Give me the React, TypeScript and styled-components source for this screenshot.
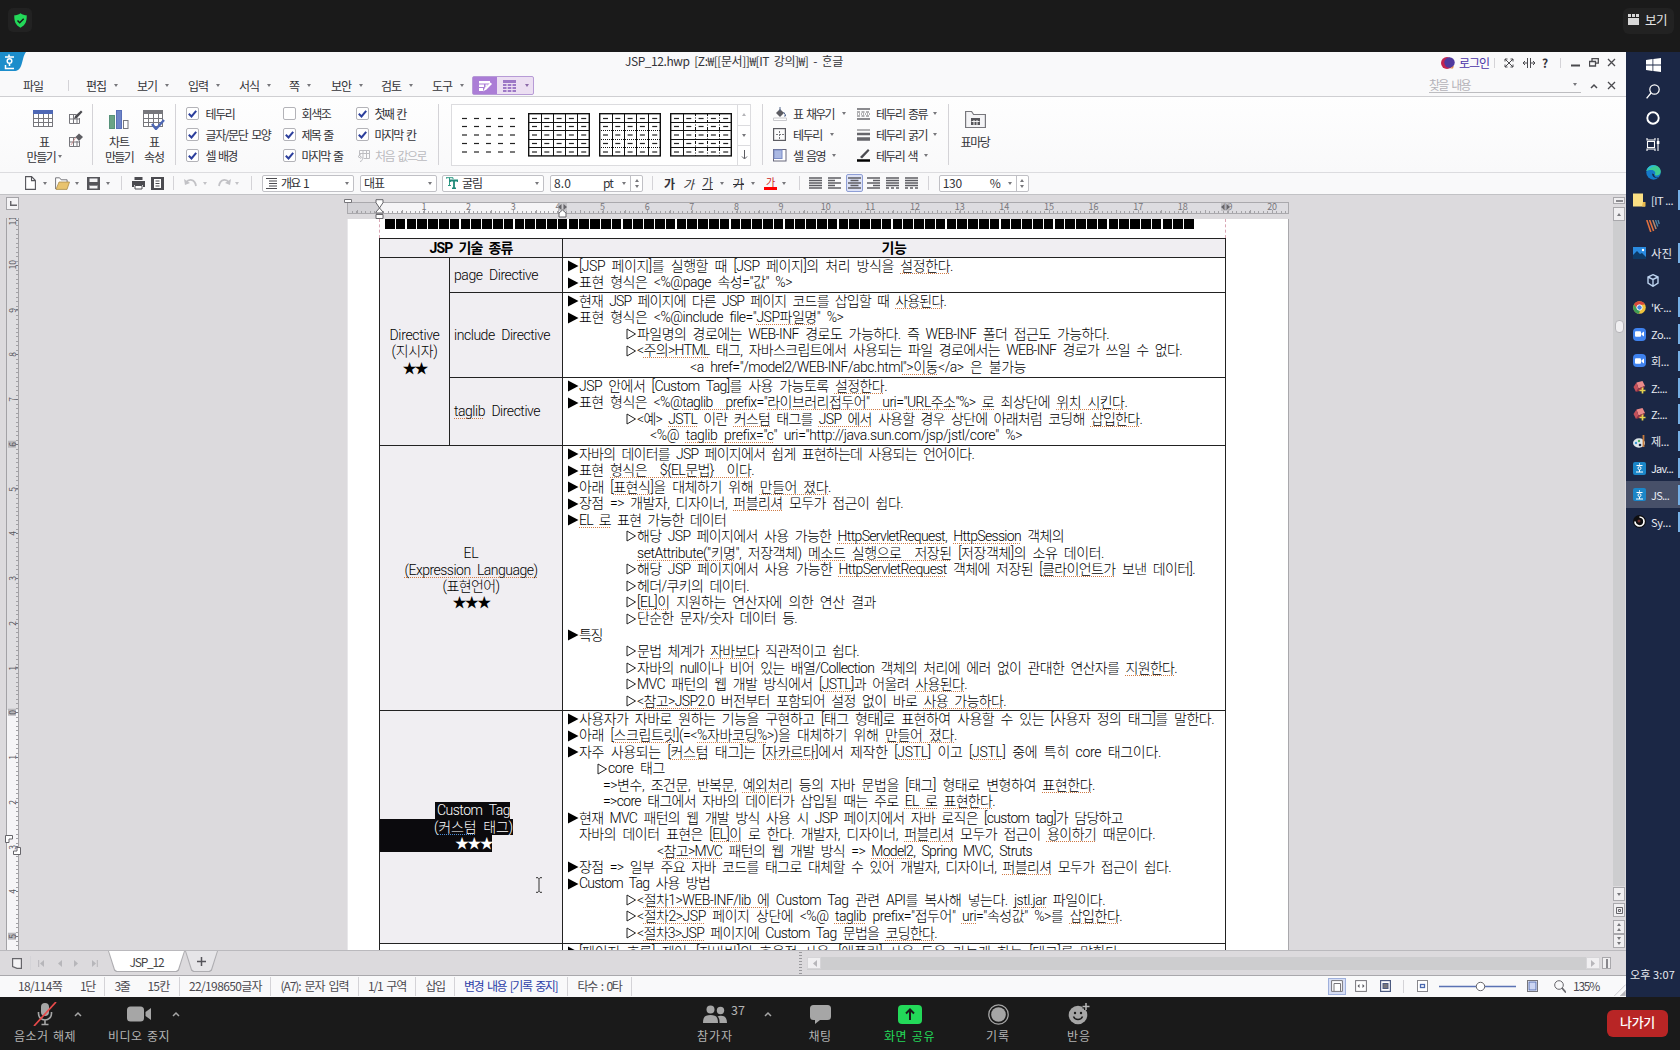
import React, { useLayoutEffect, useRef, useState } from "react";
import styled, { createGlobalStyle, css } from "styled-components";

const Global = createGlobalStyle`
  * { box-sizing: border-box; }
  body { margin: 0; background: #1a1a1a; overflow: hidden; }
  svg { display: block; flex: none; }
`;

const UI = `"Noto Sans CJK KR", "Noto Sans", sans-serif`;

/* ---------- text that fills a known measure ---------- */

const Run = styled.span<{ $size?: number; $color?: string; $weight?: number }>`
  display: inline-block;
  flex: none;
  white-space: pre;
  ${(p) => p.$size && `font-size: ${p.$size}px;`}
  ${(p) => p.$color && `color: ${p.$color};`}
  ${(p) => p.$weight && `font-weight: ${p.$weight};`}
`;

const Misspelt = styled.span<{ $color?: string }>`
  text-decoration: underline dotted ${(p) => p.$color || "#cf7a45"} 1px;
  text-underline-offset: 1.5px;
  text-decoration-skip-ink: none;
`;

type FitProps = { w: number; children: string; size?: number; color?: string; weight?: number; mark?: string };

/* A "|" in the string switches the spelling underline on and off. */
function Fit({ w, children, size, color, weight, mark }: FitProps) {
  const ref = useRef<HTMLSpanElement>(null);
  const [gap, setGap] = useState(0);
  const parts = children.split("|");
  const count = parts.join("").length;
  useLayoutEffect(() => {
    const el = ref.current;
    if (!el) return;
    el.style.letterSpacing = "0px";
    const natural = el.getBoundingClientRect().width;
    const next = (w - natural) / count;
    el.style.letterSpacing = `${next}px`;
    setGap(next);
  }, [w, count]);
  return (
    <Run ref={ref} $size={size} $color={color} $weight={weight} style={{ letterSpacing: gap }}>
      {parts.map((p, i) => (i % 2 ? <Misspelt key={i} $color={mark}>{p}</Misspelt> : p))}
    </Run>
  );
}

/* ---------- generic bits ---------- */

const Slot = styled.div<{ $w: number }>`
  flex: none;
  width: ${(p) => p.$w}px;
  height: 100%;
  display: flex;
  align-items: center;
`;

const Rule = styled.div<{ $h: number }>`
  width: 1px;
  height: ${(p) => p.$h}px;
  background: #d4d3d7;
`;

const Caret = styled.i<{ $up?: boolean; $color?: string }>`
  display: block;
  width: 0;
  height: 0;
  border: 2.5px solid transparent;
  ${(p) =>
    p.$up
      ? css`border-top: 0; border-bottom: 3px solid ${p.$color || "#77777b"};`
      : css`border-bottom: 0; border-top: 3px solid ${p.$color || "#77777b"};`}
`;

/* ---------- meeting top strip ---------- */

const TopStrip = styled.header`
  height: 52px;
  background: #1a1a1a;
  display: flex;
  justify-content: space-between;
  padding: 8px 6px 0 8px;
  font-family: ${UI};
`;
const Shield = styled.div`
  width: 24px;
  height: 24px;
  border-radius: 5px;
  background: #222;
  display: grid;
  place-items: center;
`;
const ViewButton = styled.div`
  width: 51px;
  height: 26px;
  border-radius: 6px;
  background: #222;
  color: #e6e6e6;
  display: flex;
  align-items: center;
  gap: 6px;
  padding: 0 0 4px 5px;
`;

/* ---------- frame ---------- */

const Middle = styled.div`
  display: flex;
  height: 945px;
`;
const Hwp = styled.main`
  width: 1626px;
  display: flex;
  flex-direction: column;
  background: #f9f9fa;
  font-family: ${UI};
  font-size: 12px;
  word-spacing: 2.5px;
  color: #333338;
  overflow: hidden;
`;

const TitleBar = styled.div`
  height: 23px;
  display: flex;
  align-items: flex-start;
`;
const AppMark = styled.div`
  width: 625px;
`;
const TitleText = styled.div`
  width: 816px;
  line-height: 18px;
`;
const TitleTools = styled.div`
  display: flex;
  height: 21px;
  align-items: center;
`;
const MenuBar = styled.nav`
  height: 22px;
  display: flex;
  align-items: center;
  padding-left: 23px;
  border-bottom: 1px solid #cfcfd2;
`;
const TableTabs = styled.div`
  display: flex;
  width: 62px;
  height: 19px;
  border: 1px solid #b79bd6;
  border-radius: 2px;
  background: #ecdff2;
`;
const TabHalf = styled.div<{ $on?: boolean }>`
  width: 24px;
  display: grid;
  place-items: center;
  background: ${(p) => (p.$on ? "#ab7dd6" : "transparent")};
`;
const FindBox = styled.div`
  width: 152px;
  height: 16px;
  margin-bottom: 2px;
  border-bottom: 1px solid #bdbdc0;
  display: flex;
  align-items: center;
  justify-content: space-between;
  padding-right: 4px;
`;

/* ---------- ribbon ---------- */

const Ribbon = styled.section`
  height: 76px;
  display: flex;
  align-items: center;
  background: linear-gradient(#fefefe, #f9f9fa);
  border-bottom: 1px solid #dcdcdf;
`;
const BigButton = styled.div<{ $w: number }>`
  width: ${(p) => p.$w}px;
  height: 61px;
  display: flex;
  flex-direction: column;
  align-items: center;
  padding-top: 6px;
  line-height: 14.5px;
`;
const BigIcon = styled.div`
  height: 25px;
`;
const LabelRow = styled.div`
  display: flex;
  align-items: center;
  gap: 2px;
`;
const Stack = styled.div<{ $w: number; $gap?: number }>`
  width: ${(p) => p.$w}px;
  display: flex;
  flex-direction: column;
  gap: ${(p) => p.$gap ?? 0}px;
`;
const Line21 = styled.div<{ $gap?: number }>`
  height: 21px;
  display: flex;
  align-items: center;
  gap: ${(p) => p.$gap ?? 7}px;
`;
const Tick = styled.div`
  width: 12.5px;
  height: 12.5px;
  border: 1px solid #b3b3b8;
  border-radius: 2px;
  background: #fff;
  display: grid;
  place-items: center;
`;
const Gallery = styled.div`
  width: 300px;
  height: 62px;
  border: 1px solid #dcdcdf;
  background: #fff;
  display: flex;
  align-items: center;
  padding-left: 6px;
`;
const GalleryScroll = styled.div`
  width: 13px;
  height: 100%;
  border-left: 1px solid #dcdcdf;
  display: grid;
  grid-template-rows: repeat(3, 1fr);
`;
const GalleryStep = styled.div`
  display: grid;
  place-items: center;
  & + & { border-top: 1px solid #dcdcdf; }
`;

/* ---------- format bar ---------- */

const FormatBar = styled.section`
  height: 22px;
  display: flex;
  align-items: center;
  padding: 0 0 1px 25px;
  border-bottom: 1px solid #c2c2c5;
`;
const Combo = styled.div<{ $w: number }>`
  width: ${(p) => p.$w}px;
  height: 17px;
  border: 1px solid #c0c0c5;
  border-radius: 2px;
  background: #fff;
  display: flex;
  align-items: center;
  padding: 0 4px 0 3px;
  gap: 4px;
  line-height: 14px;
`;
const Grow = styled.div`
  flex: 1;
`;
const Spin = styled.div`
  width: 12px;
  height: 15px;
  margin-right: -4px;
  border-left: 1px solid #c0c0c5;
  display: flex;
  flex-direction: column;
  align-items: center;
  justify-content: space-evenly;
`;
const Ga = styled.span<{ $italic?: boolean; $under?: boolean; $strike?: boolean; $bold?: boolean }>`
  font-size: 12px;
  line-height: 13px;
  font-weight: ${(p) => (p.$bold ? 700 : 400)};
  font-style: ${(p) => (p.$italic ? "italic" : "normal")};
  ${(p) => p.$under && "border-bottom: 1px solid #333338;"}
  ${(p) => p.$strike && "text-decoration: line-through;"}
`;
const RedGa = styled.span`
  width: 13px;
  font-size: 10px;
  line-height: 11px;
  color: #c22;
  text-align: center;
  border-bottom: 3px solid #f00;
`;
const AlignBox = styled.div<{ $on?: boolean }>`
  width: 17px;
  height: 18px;
  display: grid;
  place-items: center;
  border: 1px solid ${(p) => (p.$on ? "#8f9fd6" : "transparent")};
  background: ${(p) => (p.$on ? "#dde2f6" : "transparent")};
  border-radius: 2px;
`;

/* ---------- document ---------- */

const Desk = styled.section`
  height: 755px;
  background: #dcdadd;
  display: flex;
  overflow: hidden;
`;
const Left = styled.aside`
  width: 347px;
  padding: 2px 0 0 6px;
`;
const Corner = styled.div`
  width: 13px;
  height: 13px;
  border: 1px solid #a5a4a8;
  background: #f4f3f5;
  padding: 3px 0 0 3px;
  margin-bottom: 8px;
`;
const VRuler = styled.div`
  width: 13px;
  height: 740px;
  display: flex;
  flex-direction: column;
  border-left: 1px solid #a3a2a6;
  border-right: 1px solid #a3a2a6;
  background: linear-gradient(#dfdee1 0 492px, #f6f5f7 492px);
  overflow: hidden;
`;
const VMark = styled.div`
  flex: none;
  height: 44.75px;
  display: flex;
  align-items: center;
  justify-content: space-between;
  padding-left: 1px;
  background: repeating-linear-gradient(#a3a2a6 0 1px, transparent 1px 4.475px) right top / 2px 100% no-repeat;
  font-size: 8.5px;
  color: #55545a;
  &:first-child { margin-top: -20px; }
`;
const VNum = styled.span<{ $stop?: boolean }>`
  writing-mode: vertical-rl;
  transform: rotate(180deg);
  line-height: 8px;
  padding: 1px 0;
  background: ${(p) => (p.$stop ? "#b9b8bc" : "transparent")};
`;
const VTick = styled.i`
  width: 3px;
  height: 1px;
  background: #77767b;
`;
const VHandle = styled.div<{ $x: number; $y: number }>`
  position: absolute;
  left: ${(p) => p.$x}px;
  top: ${(p) => p.$y}px;
`;

const Center = styled.div`
  width: 942px;
  display: flex;
  flex-direction: column;
`;
const HRuler = styled.div`
  position: relative;
  flex: none;
  margin-top: 7px;
  height: 12px;
  display: flex;
  padding-left: 9px;
  border: 1px solid #aaa9ad;
  background:
    repeating-linear-gradient(90deg, #a3a2a6 0 1px, transparent 1px 4.465px) 4px bottom / 100% 2px no-repeat,
    repeating-linear-gradient(90deg, #a3a2a6 0 1px, transparent 1px 22.325px) 8.5px bottom / 100% 3px no-repeat,
    linear-gradient(90deg, #d3d2d6 0 32px, #f5f4f6 32px 215px, #dddce0 215px);
`;
const HMark = styled.div`
  flex: none;
  width: 44.65px;
  text-align: center;
  font-size: 9px;
  line-height: 7px;
  color: #77767b;
`;
const Handle = styled.div<{ $x: number; $y: number }>`
  position: absolute;
  left: ${(p) => p.$x}px;
  top: ${(p) => p.$y}px;
`;
const Page = styled.article`
  position: relative;
  margin-top: 5px;
  height: 731px;
  overflow: hidden;
  background: #fff;
  border-right: 1px solid #a9a8ac;
  border-left: 1px solid #e8e7ea;
  font-family: Roboto, "Noto Sans CJK KR", sans-serif;
  font-size: 14px;
  line-height: 16.45px;
  font-weight: 300;
  word-spacing: 3.5px;
  color: #000;
`;
const Margin = styled.div`
  height: 19px;
  width: 847px;
  margin-left: 31px;
  padding-left: 5px;
  border-left: 1px dashed #d9a6b4;
  border-right: 1px dashed #d9a6b4;
`;
const Blocks = styled.div`
  width: 809px;
  height: 10px;
  background: repeating-linear-gradient(90deg, #000 0 9.6px, #fff 9.6px 10.8px);
`;
const Table = styled.div`
  display: grid;
  margin-left: 31px;
  width: 847px;
  grid-template-columns: 70px 113px 1fr;
  grid-template-rows: 19px 35px 85px 68px 265px 233px 60px;
  border-top: 1px solid #222;
  border-left: 1px solid #222;
`;
const Cell = styled.div<{ $tint?: boolean; $cols?: number; $rows?: number; $kind?: "center" | "middle" | "text" }>`
  grid-column: span ${(p) => p.$cols ?? 1};
  grid-row: span ${(p) => p.$rows ?? 1};
  background: ${(p) => (p.$tint ? "#f0eef2" : "#fff")};
  border-right: 1px solid #222;
  border-bottom: 1px solid #222;
  display: flex;
  flex-direction: column;
  justify-content: ${(p) => (p.$kind === "text" ? "flex-start" : "center")};
  align-items: ${(p) => (p.$kind === "center" ? "center" : "flex-start")};
  padding: ${(p) => (p.$kind === "text" ? "0 0 0 5px" : p.$kind === "middle" ? "0 0 0 4px" : "0")};
`;
const Para = styled.div<{ $in: number }>`
  flex: none;
  height: 16.45px;
  padding-left: ${(p) => p.$in}px;
  display: flex;
  white-space: pre;
`;
const Mark = styled.span`
  flex: none;
  width: 11px;
  height: 16.45px;
  display: flex;
  align-items: center;
`;
const Picked = styled.div<{ $l: number; $w: number }>`
  margin-left: ${(p) => p.$l}px;
  width: ${(p) => p.$w}px;
  height: 16.7px;
  background: #0b0a0d;
  color: #fff;
  display: flex;
  justify-content: flex-end;
`;
const IBeam = styled.div`
  position: absolute;
  left: 187px;
  top: 658px;
`;

const Right = styled.aside`
  width: 337px;
  display: flex;
  justify-content: flex-end;
`;
const ScrollCol = styled.div`
  width: 14px;
  display: flex;
  flex-direction: column;
  align-items: center;
  background: #dcdadd;
  padding-top: 2px;
`;
const ScrollTrack = styled.div`
  flex: 1;
  width: 12px;
  margin: 0 0 1px;
  background: #cdcdcf;
  padding: 99px 2px 0;
`;
const Thumb = styled.div`
  width: 9px;
  height: 13px;
  border: 1px solid #b5b4b8;
  border-radius: 4px;
  background: #f0eff1;
`;
const SmallBtn = styled.div<{ $w?: number; $h: number; $mb?: number; $soft?: boolean }>`
  flex: none;
  width: ${(p) => p.$w ?? 12}px;
  height: ${(p) => p.$h}px;
  margin-bottom: ${(p) => p.$mb ?? 0}px;
  border: 1px solid ${(p) => (p.$soft ? "#d6d5d8" : "#a9a8ac")};
  background: #f0eff1;
  display: flex;
  flex-direction: column;
  gap: 2px;
  align-items: center;
  justify-content: center;
`;

/* ---------- sheets + status ---------- */

const Sheets = styled.div`
  height: 26px;
  background: #dcdadd;
  border-top: 1px solid #bab9bd;
  border-bottom: 1px solid #a9a8ac;
  display: flex;
  align-items: center;
  padding-left: 12px;
`;
const SheetTab = styled.div<{ $w: number; $on?: boolean }>`
  width: ${(p) => p.$w}px;
  height: 21px;
  align-self: flex-start;
  clip-path: polygon(0 0, 100% 0, calc(100% - 6px) 92%, calc(100% - 8px) 100%, 8px 100%, 6px 92%);
  background: #aeadb1;
  padding: 0 1px 1px;
`;
const SheetFace = styled.div<{ $on?: boolean }>`
  height: 100%;
  clip-path: polygon(0 0, 100% 0, calc(100% - 6px) 92%, calc(100% - 8px) 100%, 8px 100%, 6px 92%);
  background: ${(p) => (p.$on ? "#fff" : "#e6e5e8")};
  display: flex;
  align-items: center;
  justify-content: center;
`;
const HTrack = styled.div`
  width: 804px;
  height: 13px;
  margin-left: 5px;
  display: flex;
  align-items: center;
  justify-content: space-between;
  background: linear-gradient(90deg, #cdcdcf 0 793px, transparent 793px);
`;
const Grip = styled.div`
  width: 3px;
  height: 23px;
  background: repeating-linear-gradient(#99989c 0 1px, transparent 1px 3px);
`;
const Status = styled.footer`
  height: 21px;
  background: #f9f9fa;
  display: flex;
  align-items: center;
  padding: 0 0 1px 18px;
  line-height: 16px;
  color: #4c4a50;
`;
const ViewOn = styled.div`
  width: 18px;
  height: 17px;
  border: 1px solid #9fb0dc;
  background: #d7def4;
  display: grid;
  place-items: center;
`;

/* ---------- windows taskbar ---------- */

const Taskbar = styled.aside`
  width: 54px;
  background: #1b2745;
  display: flex;
  flex-direction: column;
  color: #e8ebf2;
  font-family: ${UI};
`;
const Task = styled.div<{ $on?: boolean; $run?: boolean; $h?: number }>`
  height: ${(p) => p.$h ?? 26.8}px;
  flex: none;
  display: flex;
  align-items: center;
  justify-content: ${(p) => (p.$run ? "flex-start" : "center")};
  padding-left: ${(p) => (p.$run ? 7 : 0)}px;
  gap: 5px;
  background:
    ${(p) => (p.$run ? "linear-gradient(#76b0e6, #76b0e6) right center / 2px 20px no-repeat," : "")}
    ${(p) => (p.$on ? "linear-gradient(#475069, #475069)" : "none")};
`;
const Clock = styled.div`
  margin-top: auto;
  padding: 0 0 13px 4px;
`;
const Tile = styled.div<{ $bg: string; $r?: number }>`
  flex: none;
  width: 13px;
  height: 13px;
  border-radius: ${(p) => p.$r ?? 2}px;
  background: ${(p) => p.$bg};
  display: grid;
  place-items: center;
`;

/* ---------- meeting controls ---------- */

const Controls = styled.footer`
  height: 53px;
  background: #1a1a1a;
  display: flex;
  font-family: ${UI};
  color: #b4b4b4;
  font-size: 12px;
  word-spacing: 1.5px;
`;
const Control = styled.div<{ $l: number; $w: number; $green?: boolean }>`
  flex: none;
  margin-left: ${(p) => p.$l}px;
  width: ${(p) => p.$w}px;
  display: flex;
  flex-direction: column;
  align-items: center;
  color: ${(p) => (p.$green ? "#23d959" : "#b4b4b4")};
`;
const ControlIcon = styled.div`
  height: 30px;
  display: flex;
  align-items: center;
  padding-top: 4px;
`;
const ControlCaret = styled.div<{ $l: number }>`
  width: 8px;
  margin-left: ${(p) => p.$l}px;
  padding-top: 14px;
`;
const Count = styled.span`
  font-size: 12.5px;
  line-height: 12px;
  margin: -8px -18px 0 4px;
  width: 14px;
`;
const Leave = styled.div`
  margin: 13px 12px 0 auto;
  width: 61px;
  height: 27px;
  border-radius: 6px;
  background: #b82525;
  color: #fff;
  display: flex;
  justify-content: center;
  line-height: 24px;
`;

/* ---------- drawings ---------- */

const X = ({ c = "#4a4a4e" }) => (
  <svg width="9" height="9" viewBox="0 0 9 9"><path d="M1 1l7 7M8 1l-7 7" stroke={c} strokeWidth="1.3" /></svg>
);
const Chevron = ({ c = "#4a4a4e" }) => (
  <svg width="8" height="6" viewBox="0 0 8 6"><path d="M1 5l3-3 3 3" fill="none" stroke={c} strokeWidth="1.5" /></svg>
);
const GridIcon = ({ head = "#4e68b5", check = false }) => (
  <svg width="22" height="20" viewBox="0 0 22 20">
    <rect x=".5" y=".5" width="19" height="16" fill="#fff" stroke="#77777c" />
    <rect x="0" y="0" width="20" height="4" fill={head} />
    <path d="M.5 8.5h19M.5 12.5h19M5.5 4v12.500M10.500 4v12.500M15.500 4v12.500" stroke="#77777c" fill="none" />
    {check && <path d="M9 14l4 5 8-9" fill="none" stroke="#4e68b5" strokeWidth="2.400" />}
  </svg>
);
const SmallTable = ({ erase = false }) => (
  <svg width="14" height="14" viewBox="0 0 14 14">
    <path d="M.5 4v9.500h10V8M.500 4.500h7M.500 9h10M4.500 4v9.500M8 8v5.500" fill="none" stroke="#77777c" />
    {erase ? <><path d="M2 12l5-8" stroke="#c88" strokeWidth=".8" /><path d="M6.500 4L10 .500 14 4l-4 4z" fill="#5e5e63" /></>
      : <path d="M5 9l1-3L12 .500 13.500 2 8 8z" fill="#4b4b50" />}
  </svg>
);
const ChartIcon = () => (
  <svg width="20" height="19" viewBox="0 0 20 19">
    <rect x=".5" y="5.500" width="5" height="13" fill="#6aa385" stroke="#57927a" />
    <rect x="7.500" y=".500" width="5" height="18" fill="#6e84c8" stroke="#5970b8" />
    <rect x="14.500" y="10.500" width="4.500" height="8" fill="#fff" stroke="#77777c" />
  </svg>
);
const Checked = ({ on = true }) => (
  <Tick>{on && <svg width="9" height="8" viewBox="0 0 9 8"><path d="M.8 3.800l2.700 2.700L8.200.8" fill="none" stroke="#2c3f9c" strokeWidth="2" /></svg>}</Tick>
);

function Style({ kind }: { kind: number }) {
  const w = kind === 0 ? 57 : 62;
  const x0 = 4;
  const step = kind === 0 ? 12 : 12.3;
  const rows = [5.5, 13.5, 22, 30.5, 39];
  return (
    <svg width={w} height="44" viewBox={`0 0 ${w} 44`}>
      {rows.map((y) => [0, 1, 2, 3, 4].map((i) => (
        <path key={`${y}${i}`} d={`M${x0 + i * step} ${y}h5`} stroke="#222" strokeWidth="1.200" />
      )))}
      {kind > 0 && (
        <g fill="none" stroke="#111">
          <rect x=".7" y=".7" width="60.600" height="42.200" strokeWidth="1.400" />
          <path d="M0 9.500h62M13.500 0v43" />
          <path d="M0 17.500h62M0 26.500h62M0 34.500h62" strokeDasharray={kind === 2 ? "1 1" : undefined} />
          <path d="M25.500 0v43M37.500 0v43M49.500 0v43" strokeDasharray={kind === 3 ? "3 1.500 1 1.500" : undefined} />
        </g>
      )}
    </svg>
  );
}

const FillIcon = () => (
  <svg width="14" height="14" viewBox="0 0 14 14"><path d="M3 6l4-4 4 4-4 4z" fill="#5c5c62" /><path d="M7 0v4M10.500 5l2 3v1h-1.500" stroke="#55688f" fill="none" /><path d="M.5 11h13v2.500h-13z" fill="#fff" stroke="#c9c9cd" /></svg>
);
const BorderIcon = () => (
  <svg width="13" height="13" viewBox="0 0 13 13"><rect x=".6" y=".6" width="11.800" height="11.800" fill="none" stroke="#5c5c62" strokeWidth="1.200" /><path d="M6.500 3v8M3 6.500h8" stroke="#77777c" strokeDasharray="2 1" /></svg>
);
const ShadeIcon = () => (
  <svg width="14" height="13" viewBox="0 0 14 13"><rect x=".5" y=".5" width="12.500" height="11.500" fill="#fff" stroke="#66667a" /><rect x="1" y="1" width="8" height="8.500" fill="#aab8e2" stroke="#7b8cc6" /></svg>
);
const KindIcon = () => (
  <svg width="13" height="12" viewBox="0 0 13 12"><path d="M0 1h13M0 11h13" stroke="#66666b" strokeWidth="1.500" /><path d="M0 4h13M0 8h13" stroke="#66666b" strokeDasharray="3 1.500" /><path d="M0 6h13" stroke="#66666b" strokeDasharray="1 1" /></svg>
);
const ThickIcon = () => (
  <svg width="13" height="12" viewBox="0 0 13 12"><path d="M0 1h13" stroke="#66666b" /><path d="M0 5h13" stroke="#66666b" strokeWidth="2.500" /><path d="M0 10h13" stroke="#66666b" strokeWidth="3.500" /></svg>
);
const PenIcon = () => (
  <svg width="14" height="13" viewBox="0 0 14 13"><path d="M3 8L11 0l1.500 1.500L5 9.500z" fill="#4b4b50" /><path d="M0 11.500h13" stroke="#000" strokeWidth="2.500" /></svg>
);

type AlignKind = "j" | "l" | "c" | "r" | "d" | "n";
const AlignIcon = ({ kind }: { kind: AlignKind }) => {
  const rows = [1, 3.5, 6, 8.5, 11];
  return (
    <svg width="13" height="12" viewBox="0 0 13 12">
      {rows.map((y, i) => {
        const short = i % 2 === 1;
        let a = 0, b = 13;
        if (kind === "l" && short) b = 7;
        if (kind === "r" && short) a = 6;
        if (kind === "c" && short) { a = 2.5; b = 10.5; }
        const dash = (kind === "d" || kind === "n") && i === 4 ? "3 2" : undefined;
        return <path key={y} d={`M${a} ${y}H${b}`} stroke="#5c5c62" strokeWidth="1.5" strokeDasharray={dash} />;
      })}
    </svg>
  );
};

const HwpLogo = () => (
  <svg width="27" height="19" viewBox="0 0 27 19">
    <path d="M0 0h26c-3 4-3 9-5 14-1.500 3.500-3 5-7 5H0z" fill="#1c8dcb" />
    <g fill="none" stroke="#fff" strokeWidth="1.500"><path d="M9 2.500v2M5 5h9M5.500 13v3.500h8.500" /><circle cx="9.500" cy="9" r="2.300" /><path d="M9.500 12v2" /></g>
  </svg>
);

/* ---------- content ---------- */

const menus: [string, number, number, number][] = [
  // label, label width, distance to caret, distance to next label
  ["편집", 20, 28, 23], ["보기", 20, 28, 23], ["입력", 20, 28, 23], ["서식", 20, 28, 22],
  ["쪽", 10, 18, 24], ["보안", 20, 28, 22], ["검토", 20, 28, 23], ["도구", 20, 28, 12],
];

type P = [number, number, string];
const L = 568;
const jspPage: P[] = [
  [L, 953, "▶[JSP 페이지]를 실행할 때 [JSP 페이지]의 처리 방식을 |설정한다|."],
  [L, 792, "▶표현 형식은 <%@page 속성=\"값\" %>"],
];
const jspInclude: P[] = [
  [L, 946, "▶현재 JSP 페이지에 다른 JSP 페이지 코드를 삽입할 때 |사용된다|."],
  [L, 843, "▶표현 형식은 <%@include file=\"|JSP파일명|\" %>"],
  [626, 1109, "▷파일명의 경로에는 WEB-INF 경로도 가능하다. 즉 WEB-INF 폴더 접근도 가능하다."],
  [626, 1182, "▷<|주의>HTML| 태그, 자바스크립트에서 사용되는 파일 경로에서는 WEB-INF 경로가 쓰일 수 없다."],
  [690, 1026, "<a href=\"/model2/WEB-INF/abc.html|\">이동|</a> 은 불가능"],
];
const jspTaglib: P[] = [
  [L, 887, "▶JSP 안에서 [Custom Tag]를 사용 가능토록 |설정한다|."],
  [L, 1127, "▶표현 형식은 <%@|taglib  prefix|=\"|라이브러리접두어\"  uri|=\"|URL주소|\"%> |로| 최상단에 |위치 시킨다|."],
  [626, 1142, "▷<예> |JSTL| 이란 |커스텀| 태그를 |JSP 에서| 사용할 경우 상단에 아래처럼 코딩해 |삽입한다|."],
  [650, 1022, "<%@ |taglib| |prefix=\"c|\" uri=\"http://java.sun.com/jsp/jstl/core\" %>"],
];
const elText: P[] = [
  [L, 974, "▶자바의 데이터를 JSP 페이지에서 쉽게 표현하는데 사용되는 언어이다."],
  [L, 754, "▶표현 |형식은  ${EL문법}  이다|."],
  [L, 831, "▶아래 [|표현식]|을 대체하기 위해 |만들어 졌다|."],
  [L, 903, "▶장점 => 개발자, 디자이너, |퍼블리셔| 모두가 접근이 쉽다."],
  [L, 726, "▶|EL 로| 표현 가능한 데이터"],
  [626, 1064, "▷해당 JSP 페이지에서 사용 가능한 |HttpServletRequest|, |HttpSession| 객체의"],
  [637, 1104, "|setAttribute(\"키명|\", 저장객체) |메소드| |실행으로  저장된| [저장객체]의 소유 데이터."],
  [626, 1195, "▷해당 JSP 페이지에서 사용 가능한 |HttpServletRequest| 객체에 저장된 [|클라이언트가| 보낸 데이터]."],
  [626, 749, "▷헤더/쿠키의 데이터."],
  [626, 876, "▷[|EL]이| 지원하는 연산자에 의한 연산 결과"],
  [626, 797, "▷단순한 문자/숫자 데이터 등."],
  [L, 602, "▶특징"],
  [626, 859, "▷문법 체계가 |자바보다| 직관적이고 쉽다."],
  [626, 1177, "▷자바의 null이나 비어 있는 배열/Collection 객체의 처리에 에러 없이 관대한 연산자를 |지원한다|."],
  [626, 967, "▷MVC 패턴의 웹 개발 방식에서 [|JSTL]|과 어울려 |사용된다|."],
  [626, 1006, "▷<|참고>JSP2|.0 버전부터 포함되어 설정 없이 바로 |사용 가능하다|."],
];
const customText: P[] = [
  [L, 1214, "▶사용자가 자바로 원하는 기능을 구현하고 [태그 형태]로 표현하여 사용할 수 있는 [사용자 정의 태그]를 말한다."],
  [L, 957, "▶아래 [|스크립트릿|](=<|%자바코딩%|>)을 대체하기 위해 |만들어 졌다|."],
  [L, 1161, "▶자주 사용되는 [|커스텀| 태그]는 [|자카르타|]에서 제작한 [|JSTL|] 이고 [|JSTL|] 중에 특히 core 태그이다."],
  [597, 665, "▷core 태그"],
  [603, 1095, "=>변수, 조건문, 반복문, |예외처리| 등의 자바 문법을 [태그] 형태로 변형하여 |표현한다|."],
  [603, 995, "=>core 태그에서 자바의 데이터가 삽입될 때는 주로 |EL 로| |표현한다|."],
  [L, 1123, "▶현재 MVC 패턴의 웹 개발 방식 사용 시 JSP 페이지에서 자바 로직은 [custom tag]가 담당하고"],
  [579, 1155, "자바의 데이터 표현은 [|EL]이| 로 한다. 개발자, 디자이너, |퍼블리셔| 모두가 접근이 |용이하기| 때문이다."],
  [657, 1032, "<|참고>MVC| 패턴의 웹 개발 방식 => |Model2|, Spring MVC, Struts"],
  [L, 1171, "▶장점 => 일부 주요 자바 코드를 태그로 대체할 수 있어 개발자, 디자이너, |퍼블리셔| 모두가 접근이 쉽다."],
  [L, 710, "▶Custom Tag 사용 방법"],
  [626, 1105, "▷<|절차1>WEB-INF/lib 에| Custom Tag 관련 API를 복사해 넣는다. |jstl.jar| 파일이다."],
  [626, 1122, "▷<|절차2>JSP| 페이지 상단에 <%@ |taglib| prefix=\"접두어\" |uri|=\"속성값\" %>를 |삽입한다|."],
  [626, 937, "▷<|절차3>JSP| 페이지에 Custom Tag 문법을 |코딩한다|."],
];
const nextText: P[] = [
  [L, 1121, "▶[페이지 흐름] 제어, [자바빈]의 효율적 사용, [애플릿] 사용 등을 가능케 하는 [태그]를 말한다."],
];

function Paras({ lines }: { lines: P[] }) {
  return (
    <>
      {lines.map(([from, to, text]) => {
        const head = text[0];
        const marked = head === "▶" || head === "▷";
        return (
          <Para key={text} $in={from - L}>
            {marked && (
              <Mark>
                <svg width="11" height="12" viewBox="0 0 11 12">
                  {head === "▶" ? <path d="M0 .5L10.500 6 0 11.500z" fill="#000" /> : <path d="M1 1L9.500 6 1 11z" fill="none" stroke="#222" />}
                </svg>
              </Mark>
            )}
            <Fit w={to - from - (marked ? 11 : 0)}>{marked ? text.slice(1) : text}</Fit>
          </Para>
        );
      })}
    </>
  );
}

const statusItems: [string, number, number, boolean, string?][] = [
  // text, width, distance to following item, rule after
  ["18/114쪽", 44, 18, false], ["1단", 15, 9, true], ["3줄", 15, 18, false], ["15칸", 22, 9, true],
  ["22/198650글자", 73, 8, true], ["(A7): 문자 입력", 68, 9, true], ["1/1 구역", 38, 9, true],
  ["삽입", 19, 9, true], ["변경 내용 [기록 중지]", 93, 10, true, "#2d3fa8"], ["타수 : 0타", 44, 9, true],
];

const hwpTile = (
  <Tile $bg="#1b86c8">
    <svg width="9" height="10" viewBox="0 0 9 10"><g fill="none" stroke="#fff"><path d="M4.500.3v1.400M1.500 2.500h6M1 9h7M4.500 7v2" /><circle cx="4.500" cy="5.200" r="1.500" /></g></svg>
  </Tile>
);
const zoomTile = (
  <Tile $bg="#3f82ee" $r={4}>
    <svg width="9" height="6" viewBox="0 0 9 6"><rect width="6" height="5.500" y=".2" rx="1" fill="#fff" /><path d="M6.500 2.200L9 .6v4.800L6.500 3.800z" fill="#fff" /></svg>
  </Tile>
);
const cubeIcon = (
  <svg width="13" height="13" viewBox="0 0 13 13"><path d="M3.500 1.500L9.500 0 12 5 5.500 7.500z" fill="#ec8a8a" /><path d="M3.500 1.500L5.500 7.500 3 11 .500 6z" fill="#c4505a" /><path d="M5.500 7.500L12 5l-2 4-7 2z" fill="#9c3444" /><path d="M9.500 6.500v6M6.500 9.500h6" stroke="#e6d34e" strokeWidth="1.700" /></svg>
);

const StopArrows = () => (
  <svg width="11" height="8" viewBox="0 0 11 8"><path d="M1 0h9v8H1z" fill="#b9b8bc" opacity=".7" /><path d="M4.500 1v6L1 4zM6.500 1v6L10 4z" fill="#66656a" /></svg>
);

export default function App() {
  return (
    <>
      <Global />
      <TopStrip>
        <Shield>
          <svg width="13" height="15" viewBox="0 0 13 15"><path d="M6.500.3C8.500 1.800 10.500 2.300 12.700 2.300c.2 6-1 9.700-6.200 12.400C1.300 12 .1 8.300.3 2.300 2.500 2.300 4.500 1.800 6.500.3z" fill="#23d959" /><path d="M3.500 7.500l2.200 2.200 4-4" fill="none" stroke="#1a1a1a" strokeWidth="1.500" /></svg>
        </Shield>
        <ViewButton>
          <svg width="11" height="11" viewBox="0 0 11 11"><path d="M0 0h3v3H0zM4 0h3v3H4zM8 0h3v3H8zM0 4h11v7H0z" fill="#d8d8d8" /></svg>
          <Fit w={22} size={12.5}>보기</Fit>
        </ViewButton>
      </TopStrip>

      <Middle>
        <Hwp>
          <TitleBar>
            <AppMark><HwpLogo /></AppMark>
            <TitleText><Fit w={217}>{"JSP_12.hwp [Z:₩[[문서]]₩[IT 강의]₩] - ᄒᆞᆫ글"}</Fit></TitleText>
            <TitleTools>
              <Slot $w={18}><svg width="14" height="12" viewBox="0 0 14 12"><circle cx="6" cy="6" r="6" fill="#c32450" /><circle cx="8.500" cy="5.500" r="5.200" fill="#503a9e" /><path d="M9 11.500l4-3-1 3z" fill="#e88d4a" /></svg></Slot>
              <Slot $w={35}><Fit w={30} color="#4a32a8">로그인</Fit></Slot>
              <Slot $w={10}><Rule $h={10} /></Slot>
              <Slot $w={19}><svg width="10" height="10" viewBox="0 0 10 10"><path d="M1 3.500V1h2.500M6.500 1H9v2.500M9 6.500V9H6.500M3.500 9H1V6.500M1 1l8 8M9 1L1 9" fill="none" stroke="#4a4a4e" /></svg></Slot>
              <Slot $w={19}><svg width="12" height="10" viewBox="0 0 12 10"><path d="M4.500 0v10M7.500 0v10M0 5h4M8 5h4M2 3L0 5l2 2M10 3l2 2-2 2" fill="none" stroke="#4a4a4e" /></svg></Slot>
              <Slot $w={18}><Fit w={7} weight={700}>?</Fit></Slot>
              <Slot $w={11}><Rule $h={10} /></Slot>
              <Slot $w={18}><svg width="9" height="9" viewBox="0 0 9 9"><path d="M0 7.500h9" stroke="#4a4a4e" strokeWidth="2" /></svg></Slot>
              <Slot $w={18}><svg width="10" height="9" viewBox="0 0 10 9"><path d="M.5 3.500h6v4.500h-6zM3 3V.7h6.300v4.500H7" fill="none" stroke="#4a4a4e" strokeWidth="1.300" /></svg></Slot>
              <X />
            </TitleTools>
          </TitleBar>

          <MenuBar>
            <Slot $w={45}><Fit w={20}>파일</Fit></Slot>
            <Slot $w={18}><Rule $h={11} /></Slot>
            {menus.map(([name, w, toCaret, toNext]) => (
              <React.Fragment key={name}>
                <Slot $w={toCaret}><Fit w={w}>{name}</Fit></Slot>
                <Slot $w={toNext}><Caret /></Slot>
              </React.Fragment>
            ))}
            <TableTabs>
              <TabHalf $on><svg width="13" height="12" viewBox="0 0 13 12"><path d="M0 1h11v2.500H0zM0 4.500h5V7H0zM0 8h4v3H0zM6.500 4.500H9L6.500 7z" fill="#fff" /><path d="M4 11.500l2-4 5.500-5 1.500 1.500-5.500 5.500z" fill="#fff" /></svg></TabHalf>
              <TabHalf><svg width="13" height="12" viewBox="0 0 13 12"><path d="M0 0h13v3H0zM0 4h3.500v2H0zM4.700 4h3.600v2H4.700zM9.500 4H13v2H9.500zM0 7h3.500v2H0zM4.700 7h3.600v2H4.700zM9.500 7H13v2H9.500zM0 10h3.500v2H0zM4.700 10h3.600v2H4.700zM9.500 10H13v2H9.500z" fill="#9d78c6" /></svg></TabHalf>
              <Slot $w={10}><Caret $color="#8b6aa8" style={{ marginLeft: 4 }} /></Slot>
            </TableTabs>
            <Slot $w={895} />
            <Slot $w={161}>
              <FindBox><Fit w={41} color="#b4b2b8">찾을 내용</Fit><Caret /></FindBox>
            </Slot>
            <Slot $w={17}><Chevron /></Slot>
            <X />
          </MenuBar>

          <Ribbon>
            <Slot $w={23} />
            <BigButton $w={42}>
              <BigIcon><GridIcon /></BigIcon>
              <Fit w={10}>표</Fit>
              <LabelRow><Fit w={29}>만들기</Fit><Caret /></LabelRow>
            </BigButton>
            <Slot $w={27}>
              <Stack $w={22} $gap={9} style={{ marginTop: -13 }}><Slot $w={22} style={{ paddingLeft: 4 }}><SmallTable /></Slot><Slot $w={22} style={{ paddingLeft: 4 }}><SmallTable erase /></Slot></Stack>
            </Slot>
            <Slot $w={9}><Rule $h={61} /></Slot>
            <BigButton $w={36}>
              <BigIcon><ChartIcon /></BigIcon>
              <Fit w={20}>차트</Fit>
              <Fit w={28}>만들기</Fit>
            </BigButton>
            <BigButton $w={34}>
              <BigIcon><GridIcon head="#77777c" check /></BigIcon>
              <Fit w={10}>표</Fit>
              <Fit w={20}>속성</Fit>
            </BigButton>
            <Slot $w={4} />
            <Slot $w={11}><Rule $h={61} /></Slot>
            <Stack $w={97}>
              <Line21><Checked /><Fit w={29}>테두리</Fit></Line21>
              <Line21><Checked /><Fit w={65}>글자/문단 모양</Fit></Line21>
              <Line21><Checked /><Fit w={31}>셀 배경</Fit></Line21>
            </Stack>
            <Stack $w={73}>
              <Line21 $gap={6}><Checked on={false} /><Fit w={29}>회색조</Fit></Line21>
              <Line21 $gap={6}><Checked /><Fit w={31}>제목 줄</Fit></Line21>
              <Line21 $gap={6}><Checked /><Fit w={41}>마지막 줄</Fit></Line21>
            </Stack>
            <Stack $w={82}>
              <Line21 $gap={6}><Checked /><Fit w={31}>첫째 칸</Fit></Line21>
              <Line21 $gap={6}><Checked /><Fit w={41}>마지막 칸</Fit></Line21>
              <Line21 $gap={4}>
                <svg width="15" height="14" viewBox="0 0 15 14"><path d="M3.500 1.500h10v8h-6M3.500 4.500h10M3.500 1.500V6M7 1.500V9M10.500 1.500V9M4 7.500c3 0 3.500 4.500 0 5M5 5.500l-3 2 3 2" fill="none" stroke="#bdbdc1" /></svg>
                <Fit w={51} color="#bbbbbf">처음 값으로</Fit>
              </Line21>
            </Stack>
            <Slot $w={13}><Rule $h={61} /></Slot>
            <Gallery>
              <Slot $w={70}><Style kind={0} /></Slot>
              <Slot $w={71}><Style kind={1} /></Slot>
              <Slot $w={71}><Style kind={2} /></Slot>
              <Slot $w={67}><Style kind={3} /></Slot>
              <GalleryScroll>
                <GalleryStep><Caret $up $color="#b5b5b9" /></GalleryStep>
                <GalleryStep><Caret /></GalleryStep>
                <GalleryStep><svg width="7" height="10" viewBox="0 0 7 10"><path d="M3.500 0v8.500M1 6.500L3.500 9 6 6.500" fill="none" stroke="#5c5c62" /></svg></GalleryStep>
              </GalleryScroll>
            </Gallery>
            <Slot $w={11} />
            <Slot $w={11}><Rule $h={61} /></Slot>
            <Stack $w={84}>
              <Line21 $gap={6}><FillIcon /><Fit w={41}>표 채우기</Fit><Caret style={{ marginLeft: 2 }} /></Line21>
              <Line21><BorderIcon /><Fit w={29}>테두리</Fit><Caret style={{ marginLeft: 1 }} /></Line21>
              <Line21 $gap={6}><ShadeIcon /><Fit w={32}>셀 음영</Fit><Caret style={{ marginLeft: 1 }} /></Line21>
            </Stack>
            <Stack $w={91}>
              <Line21 $gap={6}><KindIcon /><Fit w={51}>테두리 종류</Fit><Caret /></Line21>
              <Line21 $gap={6}><ThickIcon /><Fit w={51}>테두리 굵기</Fit><Caret /></Line21>
              <Line21 $gap={5}><PenIcon /><Fit w={41}>테두리 색</Fit><Caret style={{ marginLeft: 2 }} /></Line21>
            </Stack>
            <Slot $w={9}><Rule $h={61} /></Slot>
            <BigButton $w={36}>
              <BigIcon><svg width="21" height="19" viewBox="0 0 21 19"><path d="M.6 17.500V1.500h6l2 3h11.800v13z" fill="#f4f4f6" stroke="#77777c" strokeWidth="1.200" /><rect x="6" y="8" width="9" height="7" fill="#55555a" /><path d="M6.500 11.500h8M9 10v5M12 10v5" stroke="#fff" strokeWidth=".9" /></svg></BigIcon>
              <Fit w={29}>표마당</Fit>
            </BigButton>
          </Ribbon>

          <FormatBar>
            <Slot $w={18}><svg width="11" height="14" viewBox="0 0 11 14"><path d="M.6.6h6L10.400 4.500v8.900H.6zM6.500.6v4h4" fill="#fff" stroke="#55555a" strokeWidth="1.100" /></svg></Slot>
            <Slot $w={12}><Caret /></Slot>
            <Slot $w={20}><svg width="15" height="13" viewBox="0 0 15 13"><path d="M.6 12V.8h4l1.500 2h6V5" fill="#fff" stroke="#77777c" /><path d="M1 12.400L4 5h10.500L12 12.400z" fill="#e9c36d" stroke="#a98b4b" strokeWidth=".8" /></svg></Slot>
            <Slot $w={12}><Caret /></Slot>
            <Slot $w={19}><svg width="13" height="13" viewBox="0 0 13 13"><path d="M0 0h13v13H0z" fill="#55555a" /><path d="M2.500 1.500h8v3.500h-8zM2.500 8h8v3.500h-8z" fill="#f4f4f6" /><path d="M2.500 8.200h8" stroke="#55555a" /></svg></Slot>
            <Slot $w={15}><Caret /></Slot>
            <Slot $w={11}><Rule $h={14} /></Slot>
            <Slot $w={19}><svg width="13" height="13" viewBox="0 0 13 13"><path d="M2.500 0h8v3h-8zM0 4h13v6h-2V8H2v2H0z" fill="#4b4b50" /><path d="M3 8.500h7V12H3z" fill="#fff" stroke="#4b4b50" /></svg></Slot>
            <Slot $w={22}><svg width="13" height="13" viewBox="0 0 13 13"><path d="M0 0h13v13H0z" fill="#4b4b50" /><path d="M3 2h7v9H3z" fill="#fff" /><path d="M4.500 4h4M4.500 6.500h4M4.500 9h4" stroke="#4b4b50" /></svg></Slot>
            <Slot $w={11}><Rule $h={14} /></Slot>
            <Slot $w={19}><svg width="14" height="10" viewBox="0 0 14 10"><path d="M2 4.500C5 .5 11 1 12 8" fill="none" stroke="#c2c2c6" strokeWidth="1.800" /><path d="M0 1l1 6 5-2z" fill="#c2c2c6" /></svg></Slot>
            <Slot $w={14}><Caret $color="#c2c2c6" /></Slot>
            <Slot $w={18}><svg width="14" height="10" viewBox="0 0 14 10"><path d="M12 4.500C9 .5 3 1 2 8" fill="none" stroke="#c2c2c6" strokeWidth="1.800" /><path d="M14 1l-1 6-5-2z" fill="#c2c2c6" /></svg></Slot>
            <Slot $w={16}><Caret $color="#c2c2c6" /></Slot>
            <Slot $w={11}><Rule $h={14} /></Slot>
            <Slot $w={98}><Combo $w={92}><svg width="11" height="11" viewBox="0 0 11 11"><path d="M0 .5h11M3 3h8M3 5.500h8M3 8h8M0 10.500h11" stroke="#4b4b50" strokeWidth="1.100" /></svg><Fit w={27}>개요 1</Fit><Grow /><Caret /></Combo></Slot>
            <Slot $w={82}><Combo $w={77}><Fit w={20}>대표</Fit><Grow /><Caret /></Combo></Slot>
            <Slot $w={108}><Combo $w={102}><svg width="12" height="12" viewBox="0 0 12 12"><path d="M0 2V.7h7V2M3.500.7V8M2 8.500h3" fill="none" stroke="#2f9a86" /><path d="M4 5V3.500h8V5M8 3.500V11M6 11.300h4" fill="none" stroke="#1f8a78" strokeWidth="1.800" /></svg><Fit w={20}>굴림</Fit><Grow /><Caret /></Combo></Slot>
            <Slot $w={102}><Combo $w={93}><Fit w={17}>8.0</Fit><Grow /><Fit w={10}>pt</Fit><Slot $w={1} /><Caret /><Spin><Caret $up /><Caret /></Spin></Combo></Slot>
            <Slot $w={12}><Rule $h={14} /></Slot>
            <Slot $w={19}><Ga $bold>가</Ga></Slot>
            <Slot $w={19}><Ga $italic>가</Ga></Slot>
            <Slot $w={18}><Ga $under>가</Ga></Slot>
            <Slot $w={13}><Caret /></Slot>
            <Slot $w={18}><Ga $strike>가</Ga></Slot>
            <Slot $w={13}><Caret /></Slot>
            <Slot $w={18}><RedGa>가</RedGa></Slot>
            <Slot $w={17}><Caret /></Slot>
            <Slot $w={8}><Rule $h={14} /></Slot>
            {(["j", "l", "c", "r", "d", "n"] as AlignKind[]).map((k) => (
              <Slot key={k} $w={19.3}><AlignBox $on={k === "c"}><AlignIcon kind={k} /></AlignBox></Slot>
            ))}
            <Slot $w={5} />
            <Slot $w={11}><Rule $h={14} /></Slot>
            <Combo $w={90}><Fit w={19}>130</Fit><Grow /><Fit w={9}>%</Fit><Slot $w={1} /><Caret /><Spin><Caret $up /><Caret /></Spin></Combo>
          </FormatBar>

          <Desk>
            <Left style={{ position: "relative" }}>
              <Corner><svg width="7" height="5" viewBox="0 0 7 5"><path d="M.7 0v4.300H7" fill="none" stroke="#66656a" strokeWidth="1.500" /></svg></Corner>
              <VRuler>
                {[11, 10, 9, 8, 7, 6, 5, 4, 3, 2, 1, 0, 1, 2, 3, 4, 5].map((n, i) => (
                  <VMark key={i}><VNum $stop={i === 5 || i === 11 || i === 16}>{n}</VNum><VTick /></VMark>
                ))}
              </VRuler>
              <VHandle $x={5} $y={640}><svg width="8" height="8" viewBox="0 0 8 8"><path d="M.5.5h7v3.500H4v3.500H.5z" fill="#fff" stroke="#66656a" /></svg></VHandle>
              <VHandle $x={13} $y={652}><svg width="8" height="8" viewBox="0 0 8 8"><path d="M7.500.5v7h-7V4H4V.5z" fill="#fff" stroke="#66656a" /></svg></VHandle>
            </Left>

            <Center>
              <HRuler>
                {Array.from({ length: 21 }, (_, n) => <HMark key={n}>{n || ""}</HMark>)}
                <Handle $x={209} $y={0}><StopArrows /></Handle>
                <Handle $x={872} $y={0}><StopArrows /></Handle>
                <Handle $x={-4} $y={-4}><svg width="8" height="4"><path d="M.5.5h7v3h-7z" fill="#fff" stroke="#77767b" /></svg></Handle>
                <Handle $x={27} $y={-4}>
                  <svg width="9" height="20" viewBox="0 0 9 20"><path d="M1 .7h7v3L4.500 9l3.500 4v1H1v-1l3.500-4L1 3.700z" fill="#fff" stroke="#66656a" /><path d="M1 15.500h7v4H1z" fill="#fff" stroke="#66656a" /></svg>
                </Handle>
                <Handle $x={210} $y={6}><svg width="9" height="9" viewBox="0 0 9 9"><path d="M1 4l3.500-3L8 4v4H1z" fill="#fff" stroke="#66656a" /></svg></Handle>
              </HRuler>
              <Page>
                <Margin><Blocks /></Margin>
                <Table>
                  <Cell $tint $cols={2} $kind="center"><Fit w={83} weight={700}>JSP 기술 종류</Fit></Cell>
                  <Cell $tint $kind="center"><Fit w={25} weight={700}>기능</Fit></Cell>

                  <Cell $tint $rows={3} $kind="center">
                    <Fit w={50}>Directive</Fit><Fit w={46}>(지시자)</Fit><Fit w={24}>★★</Fit>
                  </Cell>
                  <Cell $tint $kind="middle"><Fit w={84}>page Directive</Fit></Cell>
                  <Cell $kind="text"><Paras lines={jspPage} /></Cell>
                  <Cell $tint $kind="middle"><Fit w={96}>include Directive</Fit></Cell>
                  <Cell $kind="text"><Paras lines={jspInclude} /></Cell>
                  <Cell $tint $kind="middle"><Fit w={86}>|taglib| Directive</Fit></Cell>
                  <Cell $kind="text"><Paras lines={jspTaglib} /></Cell>

                  <Cell $tint $cols={2} $kind="center">
                    <Fit w={15}>EL</Fit><Fit w={133}>|(Expression Language)|</Fit><Fit w={57}>(표현언어)</Fit><Fit w={37}>★★★</Fit>
                  </Cell>
                  <Cell $kind="text"><Paras lines={elText} /></Cell>

                  <Cell $tint $cols={2}>
                    <Picked $l={55} $w={75}><Fit w={73}>Custom Tag</Fit></Picked>
                    <Picked $l={0} $w={133}><Fit w={79} mark="#4a8ad0">(|커스텀| 태그)</Fit></Picked>
                    <Picked $l={0} $w={112}><Fit w={37}>★★★</Fit></Picked>
                  </Cell>
                  <Cell $kind="text"><Paras lines={customText} /></Cell>

                  <Cell $cols={2} />
                  <Cell $kind="text"><Paras lines={nextText} /></Cell>
                </Table>
                <IBeam><svg width="8" height="16" viewBox="0 0 8 16"><path d="M1 .7h2l1 1 1-1h2M4 1.500v13M1 15.300h2l1-1 1 1h2" fill="none" stroke="#333" /></svg></IBeam>
              </Page>
            </Center>

            <Right>
              <ScrollCol>
                <SmallBtn $h={7} $mb={3}><svg width="7" height="2"><path d="M0 1h7" stroke="#66656a" strokeWidth="1.500" /></svg></SmallBtn>
                <SmallBtn $h={14}><Caret $up /></SmallBtn>
                <ScrollTrack><Thumb /></ScrollTrack>
                <SmallBtn $h={14} $mb={2}><Caret /></SmallBtn>
                <SmallBtn $h={14} $mb={3}><svg width="7" height="7" viewBox="0 0 7 7"><path d="M.5.5h6v6h-6zM2.500 2.500h2v2h-2z" fill="none" stroke="#66656a" /></svg></SmallBtn>
                <SmallBtn $h={14}><Caret $up /><Caret $up /></SmallBtn>
                <SmallBtn $h={14} $mb={2}><Caret /><Caret /></SmallBtn>
              </ScrollCol>
            </Right>
          </Desk>

          <Sheets>
            <Slot $w={18}><svg width="10" height="11" viewBox="0 0 10 11"><path d="M.6.6h8.800v9.800H5L.6 8.500z" fill="#f4f3f5" stroke="#66656a" strokeWidth="1.200" /></svg></Slot>
            <Slot $w={8}><Rule $h={14} /></Slot>
            {[0, 1, 2, 3].map((k) => (
              <Slot key={k} $w={17.5}>
                <svg width="7" height="7" viewBox="0 0 7 7">
                  <path d={k < 2 ? "M6 0v7L2 3.500z" : "M1 0v7l4-3.500z"} fill="#b7b6ba" />
                  {k === 0 && <path d="M.7 0v7" stroke="#b7b6ba" />}
                  {k === 3 && <path d="M6.300 0v7" stroke="#b7b6ba" />}
                </svg>
              </Slot>
            ))}
            <SheetTab $w={77}><SheetFace $on><Fit w={34} color="#444">JSP_12</Fit></SheetFace></SheetTab>
            <SheetTab $w={33}><SheetFace><svg width="9" height="9" viewBox="0 0 9 9"><path d="M4.500 0v9M0 4.500h9" stroke="#55545a" strokeWidth="1.500" /></svg></SheetFace></SheetTab>
            <Slot $w={581} />
            <Grip />
            <HTrack>
              <SmallBtn $w={14} $h={12} $soft><svg width="5" height="7"><path d="M5 0v7L1 3.500z" fill="#b7b6ba" /></svg></SmallBtn>
              <Grow />
              <SmallBtn $w={14} $h={12} $soft><svg width="5" height="7"><path d="M0 0v7l4-3.500z" fill="#b7b6ba" /></svg></SmallBtn>
              <Slot $w={2} />
              <SmallBtn $w={9} $h={12}><svg width="2" height="9"><path d="M1 0v9" stroke="#66656a" strokeWidth="1.500" /></svg></SmallBtn>
            </HTrack>
          </Sheets>

          <Status>
            {statusItems.map(([text, w, gap, rule, color]) => (
              <React.Fragment key={text}>
                <Slot $w={w + gap}><Fit w={w} color={color}>{text}</Fit></Slot>
                {rule && <Slot $w={10.5}><Rule $h={19} /></Slot>}
              </React.Fragment>
            ))}
            <Grow />
            <Slot $w={27}><ViewOn><svg width="12" height="12" viewBox="0 0 12 12"><path d="M.6.6h10.800v10.800H.6zM3 11.400V3.500h6.500v8" fill="#fff" stroke="#77767b" /></svg></ViewOn></Slot>
            <Slot $w={25}><svg width="12" height="12" viewBox="0 0 12 12"><rect x=".6" y=".6" width="10.800" height="10.800" fill="#fff" stroke="#77767b" /><path d="M4.500 4L2.500 6l2 2zM7.500 4l2 2-2 2z" fill="#55545a" /></svg></Slot>
            <Slot $w={23}><svg width="11" height="12" viewBox="0 0 11 12"><rect x=".6" y=".6" width="9.800" height="10.800" fill="#fff" stroke="#4c5a80" strokeWidth="1.200" /><rect x="3" y="3.500" width="5" height="5" fill="#77767b" stroke="#4c5a80" /></svg></Slot>
            <Slot $w={14}><Rule $h={13} /></Slot>
            <Slot $w={22}><svg width="11" height="12" viewBox="0 0 11 12"><rect x=".5" y=".5" width="10" height="11" fill="#fff" stroke="#88878c" /><rect x="3.500" y="4.500" width="4" height="3" fill="#fff" stroke="#4a68ae" strokeWidth="1.300" /></svg></Slot>
            <Slot $w={88}><svg width="77" height="11" viewBox="0 0 77 11"><path d="M0 5.500h77" stroke="#5a72b4" strokeWidth="1.500" /><circle cx="41.500" cy="5.500" r="4.200" fill="#fff" stroke="#66656a" /></svg></Slot>
            <Slot $w={27}><svg width="11" height="12" viewBox="0 0 11 12"><rect x=".5" y=".5" width="10" height="11" fill="#fff" stroke="#77767b" /><rect x="2" y="2" width="7" height="8" fill="#cdd6f2" stroke="#5a72b4" /></svg></Slot>
            <Slot $w={19}><svg width="12" height="13" viewBox="0 0 12 13"><circle cx="5" cy="5" r="4.300" fill="none" stroke="#66656a" /><path d="M8 8l4 4.500" stroke="#66656a" strokeWidth="1.800" /></svg></Slot>
            <Slot $w={41}><Fit w={26}>135%</Fit></Slot>
            <svg width="12" height="20" viewBox="0 0 12 21"><path d="M0 21L12 9M6 21l6-6v6z" fill="#b4b3b7" stroke="#c8c7cb" /></svg>
          </Status>
        </Hwp>

        <Taskbar>
          <Task $h={26}><svg width="15" height="14" viewBox="0 0 15 14"><path d="M0 2l6.500-1v5.600H0zM7.300.9L15 0v6.600H7.300zM0 7.400h6.500V13L0 12zM7.300 7.400H15V14l-7.700-1z" fill="#fff" /></svg></Task>
          <Task><svg width="14" height="15" viewBox="0 0 14 15"><circle cx="8.500" cy="5.500" r="4.700" fill="none" stroke="#fff" strokeWidth="1.200" /><path d="M5 9L.6 14.400" stroke="#fff" strokeWidth="1.300" /></svg></Task>
          <Task><svg width="14" height="14" viewBox="0 0 14 14"><circle cx="7" cy="7" r="5.700" fill="none" stroke="#fff" strokeWidth="1.900" /></svg></Task>
          <Task $h={26.2}><svg width="14" height="13" viewBox="0 0 14 13"><path d="M1 0v2h8V0M1 13v-2h8v2M1.500 3.500h7v6h-7zM12 0v13" fill="none" stroke="#fff" strokeWidth="1.100" /><path d="M10.800 3h2.600v3h-2.600z" fill="#fff" /></svg></Task>
          <Task $h={28.5}><svg width="15" height="15" viewBox="0 0 15 15"><circle cx="7.500" cy="7.500" r="7.200" fill="#1479c9" /><path d="M.4 6C1.500 1.500 5 .3 7.800.3c4 0 7 3 7 6.200 0 2.500-2 4-4.300 4-1 0-2-.4-1.500-1.200C10 7.500 8.500 5 5.500 5 3 5 1.200 5.500.4 6z" fill="#3ccb94" /><path d="M.4 6C1.500 1.500 5 .3 7.800.3c1 0 2 .3 3 .7C7 1 3 3 .4 6z" fill="#2bb8dc" /><path d="M6 8.500c0 3 2.500 5 6 4.500 1.500-.5 2-1 2-1-2.500 1.300-6 .5-6-2.800z" fill="#1b2745" /></svg></Task>
          <Task $run><svg width="13" height="14" viewBox="0 0 13 14"><path d="M0 .5h10V9h2v4.500H0z" fill="#fbdf84" /><path d="M10 9h2.500v4.500H9z" fill="#e9b94a" /></svg><Fit w={22} size={11}>[IT ...</Fit></Task>
          <Task><svg width="14" height="12" viewBox="0 0 14 12"><path d="M.8 0l4 12M3.600 0l4 11" stroke="#e0703e" strokeWidth="1.600" /><path d="M6.800 0l3.300 9" stroke="#b7886c" strokeWidth="1.500" /><path d="M9.500 0l2.300 6.500M12 0l1.300 4" stroke="#4e86a8" strokeWidth="1.300" /></svg></Task>
          <Task $run><svg width="13" height="12" viewBox="0 0 13 12"><path d="M0 0h13v12H0z" fill="#2a8be0" /><path d="M0 12V8l4-4 3 3 2-1 4 4v2z" fill="#0d3a66" /><circle cx="10" cy="3" r="1.200" fill="#fff" /></svg><Fit w={21} size={11.5}>사진</Fit></Task>
          <Task $h={27.2}><svg width="12" height="13" viewBox="0 0 12 13"><path d="M6 .7l5 2.300v6L6 12.300 1 9V3zM1 3l5 2.500L11 3M6 5.500v6.800" fill="none" stroke="#bcd2ee" strokeWidth="1.400" /></svg></Task>
          <Task $run><svg width="13" height="13" viewBox="0 0 13 13"><circle cx="6.500" cy="6.500" r="6.300" fill="#f0c43c" /><path d="M1 3.500a6.300 6.300 0 0111 0L6.500 4 4 8z" fill="#d9483b" /><path d="M1 3.500l3.500 5 2.500 1-1 3.300A6.300 6.300 0 011 3.500z" fill="#3d9e55" /><circle cx="6.500" cy="6.500" r="2.700" fill="#4a86e0" stroke="#fff" /></svg><Fit w={20} size={11}>'K-...</Fit></Task>
          <Task $run>{zoomTile}<Fit w={20} size={11}>Zo...</Fit></Task>
          <Task $run>{zoomTile}<Fit w={18} size={11}>회...</Fit></Task>
          <Task $run>{cubeIcon}<Fit w={16} size={11}>Z:...</Fit></Task>
          <Task $run>{cubeIcon}<Fit w={16} size={11}>Z:...</Fit></Task>
          <Task $run><svg width="13" height="13" viewBox="0 0 13 13"><ellipse cx="6" cy="8" rx="6" ry="4.700" fill="#dfe6ea" /><circle cx="3" cy="8" r="1.200" fill="#3a9ad6" /><circle cx="6" cy="6" r="1.200" fill="#4cae5c" /><circle cx="7" cy="10" r="1.300" fill="#1b2745" /><path d="M10.500 0v12" stroke="#c67c3e" strokeWidth="1.800" /></svg><Fit w={18} size={11}>제...</Fit></Task>
          <Task $run>{hwpTile}<Fit w={22} size={11}>Jav...</Fit></Task>
          <Task $run $on>{hwpTile}<Fit w={18} size={11}>JS...</Fit></Task>
          <Task $run><svg width="13" height="13" viewBox="0 0 13 13"><circle cx="6.500" cy="6.500" r="6.500" fill="#0e0e10" /><path d="M6.500 2a4.500 4.500 0 11-4.500 4.500" fill="none" stroke="#fff" strokeWidth="1.700" /><circle cx="6" cy="6" r="1.500" fill="#6a2f2f" /></svg><Fit w={20} size={11}>Sy...</Fit></Task>
          <Clock><Fit w={45} size={11}>오후 3:07</Fit></Clock>
        </Taskbar>
      </Middle>

      <Controls>
        <Control $l={14} $w={62}>
          <ControlIcon><svg width="24" height="24" viewBox="0 0 24 24"><rect x="8" y="1" width="8" height="13" rx="4" fill="#a6a6a6" /><path d="M5.500 10v1.500a6.500 6.500 0 0013 0V10M12 18v4M8.500 22.500h7" fill="none" stroke="#a6a6a6" strokeWidth="1.600" /><path d="M1 24L23 0" stroke="#e84a4a" strokeWidth="1.700" /></svg></ControlIcon>
          <Fit w={62}>음소거 해제</Fit>
        </Control>
        <ControlCaret $l={-2}><Chevron c="#a6a6a6" /></ControlCaret>
        <Control $l={26} $w={62}>
          <ControlIcon><svg width="24" height="16" viewBox="0 0 24 16"><rect width="17" height="15" y=".5" rx="3.500" fill="#a6a6a6" /><path d="M18.500 6L24 2v12l-5.500-4z" fill="#a6a6a6" /></svg></ControlIcon>
          <Fit w={62}>비디오 중지</Fit>
        </Control>
        <ControlCaret $l={2}><Chevron c="#a6a6a6" /></ControlCaret>
        <Control $l={517} $w={36}>
          <ControlIcon>
            <svg width="24" height="19" viewBox="0 0 24 19"><circle cx="7.500" cy="4.500" r="4" fill="#a6a6a6" /><path d="M0 18c0-6 2-8 7.500-8s7.500 2 7.500 8z" fill="#a6a6a6" /><circle cx="17.500" cy="5.500" r="3.700" fill="#a6a6a6" /><path d="M16 11c5-1 8 1 8 7h-7.500c0-3 0-5-2-6.500z" fill="#a6a6a6" /></svg>
            <Count>37</Count>
          </ControlIcon>
          <Fit w={36}>참가자</Fit>
        </Control>
        <ControlCaret $l={31}><Chevron c="#a6a6a6" /></ControlCaret>
        <Control $l={36} $w={24}>
          <ControlIcon><svg width="21" height="19" viewBox="0 0 21 19"><path d="M3.500 0h14A3.500 3.500 0 0121 3.500v8a3.500 3.500 0 01-3.500 3.500H10l-5 4v-4H3.500A3.500 3.500 0 010 11.500v-8A3.500 3.500 0 013.500 0z" fill="#a6a6a6" /></svg></ControlIcon>
          <Fit w={23}>채팅</Fit>
        </Control>
        <Control $l={52} $w={51} $green>
          <ControlIcon><svg width="24" height="19" viewBox="0 0 24 19"><rect width="24" height="19" rx="4" fill="#23d959" /><path d="M12 15V5M8 8.500L12 4.500l4 4" fill="none" stroke="#1a1a1a" strokeWidth="2" /></svg></ControlIcon>
          <Fit w={51}>화면 공유</Fit>
        </Control>
        <Control $l={51} $w={24}>
          <ControlIcon><svg width="21" height="21" viewBox="0 0 21 21"><circle cx="10.500" cy="10.500" r="9.700" fill="none" stroke="#a6a6a6" strokeWidth="1.300" /><circle cx="10.500" cy="10.500" r="7.300" fill="#a6a6a6" /></svg></ControlIcon>
          <Fit w={24}>기록</Fit>
        </Control>
        <Control $l={57} $w={24}>
          <ControlIcon><svg width="22" height="22" viewBox="0 0 22 22"><circle cx="10" cy="12" r="9.300" fill="#a6a6a6" /><circle cx="7" cy="10" r="1.200" fill="#1a1a1a" /><circle cx="13" cy="10" r="1.200" fill="#1a1a1a" /><path d="M5.500 13.500c1.500 4 7.500 4 9 0" fill="none" stroke="#1a1a1a" strokeWidth="1.500" /><path d="M18 0v7M14.500 3.500h7" stroke="#1a1a1a" strokeWidth="4" /><path d="M18 0v7M14.500 3.500h7" stroke="#b8b8b8" strokeWidth="1.500" /></svg></ControlIcon>
          <Fit w={24}>반응</Fit>
        </Control>
        <Leave><Fit w={35} size={13} weight={500}>나가기</Fit></Leave>
      </Controls>
    </>
  );
}
